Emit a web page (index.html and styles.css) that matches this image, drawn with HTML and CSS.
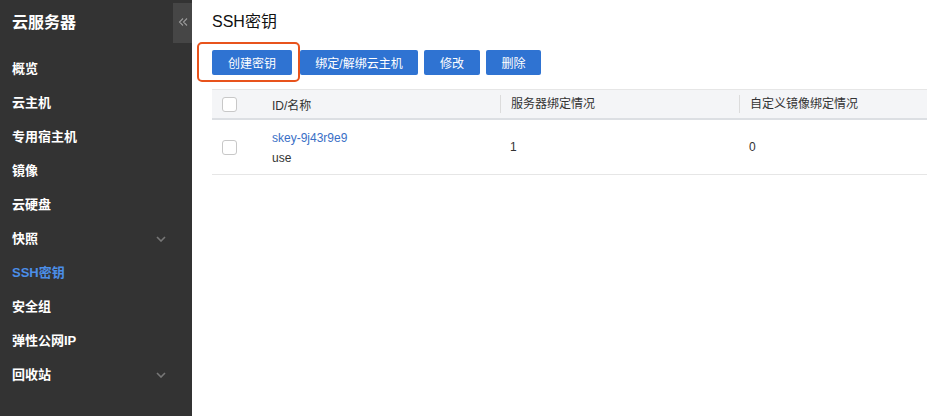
FILE: index.html
```html
<!DOCTYPE html>
<html lang="zh-CN">
<head>
<meta charset="utf-8">
<title>SSH密钥</title>
<link rel="stylesheet" href="styles.css">
</head>
<body>
<div class="app">
  <aside class="sidebar">
    <div class="side-title">云服务器</div>
    <div class="collapse"><svg viewBox="0 0 10 10" width="10" height="10"><path d="M5 1.5 L1.5 5 L5 8.5 M9 1.5 L5.5 5 L9 8.5" fill="none" stroke="#9c9c9c" stroke-width="1.1"/></svg></div>
    <ul class="menu">
      <li class="item">概览</li>
      <li class="item">云主机</li>
      <li class="item">专用宿主机</li>
      <li class="item">镜像</li>
      <li class="item">云硬盘</li>
      <li class="item has-sub">快照<svg class="chev" viewBox="0 0 10 6" width="10" height="6"><path d="M1 1 L5 5 L9 1" fill="none" stroke="#777" stroke-width="1.6"/></svg></li>
      <li class="item active">SSH密钥</li>
      <li class="item">安全组</li>
      <li class="item">弹性公网IP</li>
      <li class="item has-sub">回收站<svg class="chev" viewBox="0 0 10 6" width="10" height="6"><path d="M1 1 L5 5 L9 1" fill="none" stroke="#777" stroke-width="1.6"/></svg></li>
    </ul>
  </aside>
  <main class="main">
    <h1 class="title">SSH密钥</h1>
    <div class="toolbar">
      <div class="btn-wrap">
        <button class="btn btn-create">创建密钥</button>
        <span class="highlight"></span>
      </div>
      <button class="btn btn-bind">绑定/解绑云主机</button>
      <button class="btn btn-edit">修改</button>
      <button class="btn btn-del">删除</button>
    </div>
    <div class="table">
      <div class="row head">
        <div class="cell chk"><span class="box"></span></div>
        <div class="cell">ID/名称</div>
        <div class="cell sep">服务器绑定情况</div>
        <div class="cell sep">自定义镜像绑定情况</div>
      </div>
      <div class="row body">
        <div class="cell chk"><span class="box"></span></div>
        <div class="cell name"><a class="link">skey-9j43r9e9</a><span>use</span></div>
        <div class="cell">1</div>
        <div class="cell">0</div>
      </div>
    </div>
  </main>
</div>
</body>
</html>
```
FILE: styles.css
```css
* { box-sizing: border-box; }
html, body { margin: 0; padding: 0; height: 100%; }
body {
  font-family: "Liberation Sans", "Noto Sans CJK SC", sans-serif;
  background: #fff;
  color: #333;
}
.app { display: flex; height: 416px; overflow: hidden; }
.sidebar {
  width: 192px;
  flex: none;
  background: #333333;
  position: relative;
}
.side-title {
  height: 46px;
  line-height: 46px;
  padding-left: 12px;
  color: #fff;
  font-size: 16px;
  font-weight: bold;
}
.collapse {
  position: absolute;
  right: 0;
  top: 3px;
  width: 19px;
  height: 40px;
  background: #464646;
  display: flex;
  align-items: center;
  justify-content: center;
  padding-bottom: 2px;
}
.collapse svg { display: block; }
.menu { list-style: none; margin: 6px 0 0; padding: 0; }
.item {
  height: 34px;
  line-height: 34px;
  padding-left: 12px;
  padding-right: 26px;
  color: #fff;
  font-size: 13px;
  font-weight: bold;
  display: flex;
  align-items: center;
  justify-content: space-between;
}
.item.active { color: #4b8ee8; }
.chev { display: block; }
.main { flex: 1; padding-left: 20px; min-width: 0; }
.title {
  margin: 0;
  height: 44px;
  line-height: 44px;
  font-size: 16px;
  font-weight: normal;
  color: #111;
}
.toolbar {
  display: flex;
  gap: 6px;
  margin-top: 6px;
  height: 25px;
}
.btn-wrap { position: relative; margin-right: 2px; }
.btn {
  height: 25px;
  padding: 0;
  border: none;
  border-radius: 2px;
  background: #2f73d2;
  color: #fff;
  font-family: "Liberation Sans", "Noto Sans CJK SC", sans-serif;
  font-size: 12px;
  text-align: center;
  cursor: pointer;
}
.btn-create { width: 80px; }
.btn-bind { width: 118px; }
.btn-edit { width: 56px; }
.btn-del { width: 55px; }
.highlight {
  position: absolute;
  left: -15px;
  top: -8px;
  width: 103px;
  height: 40px;
  border: 2px solid #e8531c;
  border-radius: 5px;
  pointer-events: none;
}
.table { margin-top: 14px; }
.row {
  display: grid;
  grid-template-columns: 50px 238px 239px 1fr;
  align-items: center;
}
.row.head {
  height: 31px;
  background: #f4f5f7;
  border-top: 1px solid #e6e6e6;
  border-bottom: 2px solid #dcdfe3;
  font-size: 12px;
  color: #333;
}
.row.body {
  height: 55px;
  border-bottom: 1px solid #e6e6e6;
  font-size: 12px;
  color: #333;
}
.cell { padding-left: 10px; white-space: nowrap; }
.cell.sep { border-left: 1px solid #dcdcdc; height: 18px; line-height: 18px; }
.box {
  display: block;
  width: 15px;
  height: 15px;
  border: 1px solid #c8c8c8;
  border-radius: 3px;
  background: #fff;
}
.name { display: flex; flex-direction: column; gap: 6px; padding-top: 1px; }
.link { color: #3a6fc6; font-size: 12px; }
```
